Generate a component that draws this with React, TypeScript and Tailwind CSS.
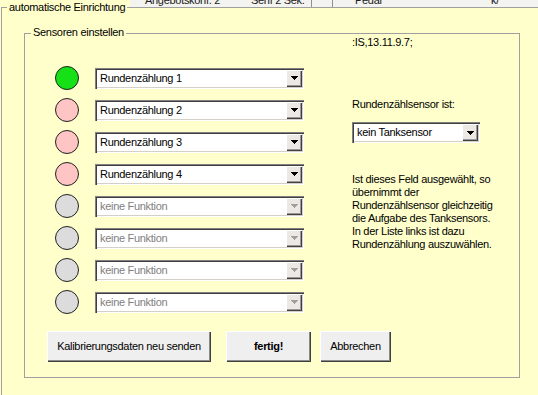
import React from "react";

const sensors = [
  { text: "Rundenzählung 1", color: "bg-[#16e016]", disabled: false },
  { text: "Rundenzählung 2", color: "bg-[#ffc4c4]", disabled: false },
  { text: "Rundenzählung 3", color: "bg-[#ffc4c4]", disabled: false },
  { text: "Rundenzählung 4", color: "bg-[#ffc4c4]", disabled: false },
  { text: "keine Funktion", color: "bg-[#dcdcdc]", disabled: true },
  { text: "keine Funktion", color: "bg-[#dcdcdc]", disabled: true },
  { text: "keine Funktion", color: "bg-[#dcdcdc]", disabled: true },
  { text: "keine Funktion", color: "bg-[#dcdcdc]", disabled: true },
];

function Combo({ text, disabled, wide }: { text: string; disabled?: boolean; wide?: boolean }) {
  return (
    <div
      className={`flex h-[21px] shrink-0 items-center bg-white pl-[5px] pr-[2px] shadow-[inset_1px_1px_0_#808080,inset_2px_2px_0_#404040,inset_-1px_-1px_0_#ffffff,inset_-2px_-2px_0_#d4d0c8] ${
        wide ? "w-[209px]" : "w-[128px]"
      }`}
    >
      <span className={`flex-1 truncate leading-[13px] ${disabled ? "text-[#808080]" : "text-black"}`}>{text}</span>
      <div className="flex h-[17px] w-[16px] items-center justify-center bg-[#ece9e4] shadow-[inset_1px_1px_0_#ffffff,inset_-1px_-1px_0_#404040,inset_-2px_-2px_0_#9a9a9a]">
        <svg width="7" height="4" viewBox="0 0 7 4" shapeRendering="crispEdges">
          <path d="M0 0h7v1H6v1H5v1H4v1H3V3H2V2H1V1H0z" fill={disabled ? "#a0a0a0" : "#000"} />
        </svg>
      </div>
    </div>
  );
}

function Button({ children, className }: { children: React.ReactNode; className: string }) {
  return (
    <div
      className={`flex h-[31px] items-center justify-center bg-[#efefef] shadow-[inset_1px_1px_0_#ffffff,inset_-1px_-1px_0_#404040,inset_-2px_-2px_0_#8a8a8a] ${className}`}
    >
      {children}
    </div>
  );
}

export default function App() {
  return (
    <div
      className="h-[395px] w-[538px] overflow-hidden bg-[#ffffcc] text-[11px] tracking-[-0.3px] text-black"
      style={{ fontFamily: '"Liberation Sans", Arial, sans-serif' }}
    >
      {/* cut-off tab strip of the window behind */}
      <div className="flex h-[7px]">
        <div className="w-[130px]" />
        <div className="flex flex-1 overflow-hidden bg-[#f3f3ef] text-[#202020]">
          <div className="mt-[-6px] flex h-[13px] items-start leading-[13px]">
            <span className="ml-[15px] w-[86px]">Angebotskonf. 2</span>
            <span className="ml-[20px] w-[60px]">Senf 2 Sek.</span>
            <span className="h-[13px] w-px bg-[#909090]" />
            <span className="ml-[20px] h-[13px] w-px bg-[#909090]" />
            <span className="ml-[22px] w-[40px]">Pedal</span>
            <span className="ml-[96px]">k/</span>
          </div>
        </div>
      </div>

      {/* outer group: automatische Einrichtung */}
      <div className="relative ml-[1px] h-[388px] border-l border-t border-[#a0a0a0] pl-[22px] pt-[25px]">
        <span className="absolute left-[5px] top-[-7px] bg-[#ffffcc] px-[2px] leading-[13px]">automatische Einrichtung</span>

        {/* inner group: Sensoren einstellen */}
        <div className="relative flex h-[345px] w-[496px] flex-col border border-[#a0a0a0]">
          <span className="absolute left-[6px] top-[-8px] bg-[#ffffcc] px-[2px] leading-[13px]">Sensoren einstellen</span>

          <div className="flex">
            <div className="flex flex-col gap-[8px] pl-[30px] pt-[32px]">
              {sensors.map((s, i) => (
                <div key={i} className="flex h-[24px] items-center gap-[16px]">
                  <div className={`h-[24px] w-[24px] rounded-full border border-[#202020] ${s.color}`} />
                  <Combo text={s.text} disabled={s.disabled} wide />
                </div>
              ))}
            </div>

            <div className="ml-[48px] flex flex-col pt-[2px] leading-[13px]">
              <span>:IS,13.11.9.7;</span>
              <span className="mt-[49px]">Rundenzählsensor ist:</span>
              <div className="mt-[11px]">
                <Combo text="kein Tanksensor" />
              </div>
              <p className="mt-[30px] whitespace-nowrap leading-[13px]">
                Ist dieses Feld ausgewählt, so
                <br />
                übernimmt der
                <br />
                Rundenzählsensor gleichzeitig
                <br />
                die Aufgabe des Tanksensors.
                <br />
                In der Liste links ist dazu
                <br />
                Rundenzählung auszuwählen.
              </p>
            </div>
          </div>

          <div className="mt-[17px] flex pl-[22px]">
            <Button className="w-[164px]">Kalibrierungsdaten neu senden</Button>
            <Button className="ml-[15px] w-[85px] font-bold">fertig!</Button>
            <Button className="ml-[9px] w-[71px]">Abbrechen</Button>
          </div>
        </div>
      </div>
    </div>
  );
}
